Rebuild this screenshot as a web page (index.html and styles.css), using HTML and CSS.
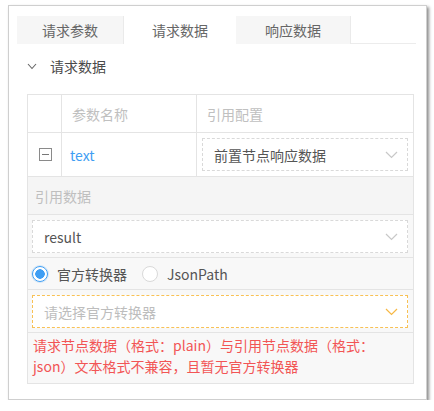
FILE: index.html
```html
<!DOCTYPE html>
<html lang="zh">
<head>
  <meta charset="UTF-8">
  <title>请求数据</title>
  <link rel="stylesheet" href="styles.css">
</head>
<body>
  <div class="card">
    <div class="tabs">
      <div class="tab tab-1">请求参数</div>
      <div class="tab tab-2 active">请求数据</div>
      <div class="tab tab-3">响应数据</div>
    </div>

    <div class="section">
      <div class="section-title">
        <svg class="arrow" width="10" height="7" viewBox="0 0 10 7"><path d="M1 1l4 4.5L9 1" fill="none" stroke="#666" stroke-width="1.1"/></svg>
        <span>请求数据</span>
      </div>

      <div class="grid">
        <div class="row head">
          <div class="cell c1"></div>
          <div class="cell c2">参数名称</div>
          <div class="cell c3">引用配置</div>
        </div>
        <div class="row item">
          <div class="cell c1">
            <span class="collapse"></span>
          </div>
          <div class="cell c2 name">text</div>
          <div class="cell c3">
            <div class="select">
              <span class="value">前置节点响应数据</span>
              <svg class="chev" width="13" height="8" viewBox="0 0 13 8"><path d="M1 1l5.5 5.5L12 1" fill="none" stroke="#c8c8c8" stroke-width="1.2"/></svg>
            </div>
          </div>
        </div>
        <div class="row label">引用数据</div>
        <div class="row pad">
          <div class="select">
            <span class="value">result</span>
            <svg class="chev" width="13" height="8" viewBox="0 0 13 8"><path d="M1 1l5.5 5.5L12 1" fill="none" stroke="#c8c8c8" stroke-width="1.2"/></svg>
          </div>
        </div>
        <div class="row radios">
          <label class="radio checked"><span class="dot"></span>官方转换器</label>
          <label class="radio"><span class="dot"></span>JsonPath</label>
        </div>
        <div class="row pad">
          <div class="select warn">
            <span class="value placeholder">请选择官方转换器</span>
            <svg class="chev" width="13" height="8" viewBox="0 0 13 8"><path d="M1 1l5.5 5.5L12 1" fill="none" stroke="#f7b844" stroke-width="1.2"/></svg>
          </div>
        </div>
        <div class="row error">请求节点数据（格式：plain）与引用节点数据（格式：json）文本格式不兼容，且暂无官方转换器</div>
      </div>
    </div>
  </div>
</body>
</html>
```

FILE: styles.css
```css
html, body {
  margin: 0;
  background: #fff;
  font-family: "Noto Sans CJK SC", "Open Sans", sans-serif;
  font-size: 14px;
  color: #555;
}
.card {
  margin: 5px 0 0 8px;
  width: 419px;
  height: 395px;
  border: 1px solid #cfcfcf;
  box-shadow: 2px 2px 3px rgba(0, 0, 0, 0.45);
  padding: 10px 10px 0 8px;
  box-sizing: border-box;
}
.tabs {
  display: flex;
  height: 28px;
  border-bottom: 1px solid #ececec;
  box-sizing: border-box;
}
.tab {
  display: flex;
  align-items: center;
  justify-content: center;
  background: #f6f6f6;
  color: #666;
  height: 28px;
  box-sizing: border-box;
}
.tab-1 { width: 106px; }
.tab-2 { width: 113px; }
.tab-3 { width: 115px; border-right: 1px solid #eaeaea; }
.tab.active {
  background: #fff;
  border-left: 1px solid #eaeaea;
}
.section {
  padding: 0 2px 0 10px;
}
.section-title {
  display: flex;
  align-items: center;
  height: 26px;
  margin-top: 9px;
  color: #4a4a4a;
}
.arrow {
  margin: 0 13px 0 0;
}
.grid {
  margin-top: 15px;
  border: 1px solid #e4e4e4;
}
.row {
  border-top: 1px solid #e4e4e4;
}
.row:first-child {
  border-top: 0;
}
.head, .item {
  display: grid;
  grid-template-columns: 33px 135px 1fr;
}
.cell {
  display: flex;
  align-items: center;
  border-left: 1px solid #e4e4e4;
  padding: 0 10px;
}
.cell.c1 {
  border-left: 0;
  padding: 0;
  justify-content: center;
}
.head {
  height: 37px;
  color: #c0c0c0;
}
.item {
  height: 43px;
}
.item .c3 {
  padding: 0 5px;
}
.collapse {
  width: 11px;
  height: 11px;
  border: 1px solid #8a8a8a;
  position: relative;
  margin-left: 1px;
}
.collapse::after {
  content: "";
  position: absolute;
  left: 2px;
  right: 2px;
  top: 5px;
  height: 1px;
  background: #777;
}
.name {
  color: #3f9ef3;
  padding-left: 8px;
}
.select {
  flex: 1;
  height: 33px;
  border: 1px dashed #d9d9d9;
  background: #fff;
  display: flex;
  align-items: center;
  justify-content: space-between;
  padding: 0 9px 0 11px;
  box-sizing: border-box;
}
.select .value {
  color: #555;
}
.select .placeholder {
  color: #bdbdbd;
}
.select.warn {
  border-color: #f8c155;
}
.label {
  height: 37px;
  display: flex;
  align-items: center;
  padding-left: 7px;
  background: #f5f5f5;
  color: #bfbfbf;
}
.pad {
  display: flex;
  padding: 5px 5px 4px 4px;
  background: #f8f8f8;
}
.radios {
  height: 31px;
  display: flex;
  align-items: center;
  padding-left: 4px;
  background: #f8f8f8;
}
.radio {
  display: flex;
  align-items: center;
  color: #555;
  margin-right: 15px;
}
.radio .dot {
  width: 14px;
  height: 14px;
  border: 1px solid #d9d9d9;
  border-radius: 50%;
  background: #fff;
  margin-right: 9px;
  box-sizing: content-box;
}
.radio.checked .dot {
  border-color: #3f9ef3;
  box-shadow: 0 0 0 1px rgba(63, 158, 243, 0.2);
  background: radial-gradient(circle, #3f9ef3 0 4.5px, #fff 5px);
}
.error {
  padding: 2px 20px 6px 5px;
  background: #f8f8f8;
  color: #f25555;
  line-height: 21px;
}
```
